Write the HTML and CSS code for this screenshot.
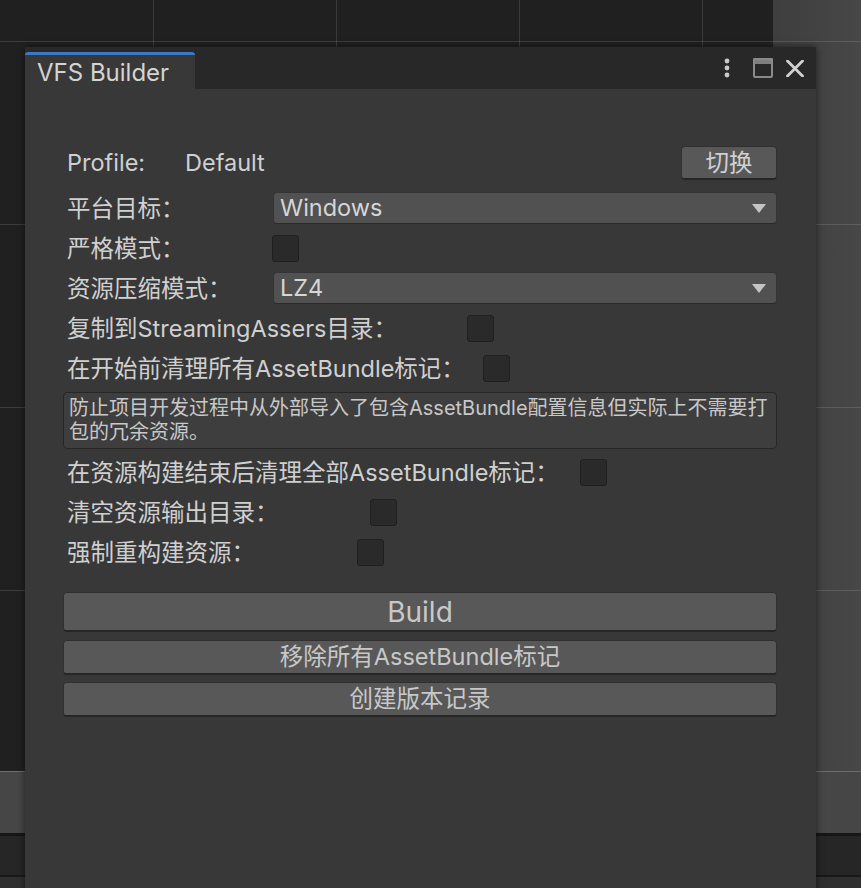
FILE: index.html
```html
<!DOCTYPE html>
<html lang="zh-CN">
<head>
<meta charset="utf-8">
<title>VFS Builder</title>
<link rel="stylesheet" href="styles.css">
</head>
<body>
<div class="window">
  <div class="tabbar">
    <div class="tab">VFS Builder</div>
    <div class="tab-actions">
      <svg class="ico-kebab" width="6" height="20" viewBox="0 0 6 20"><circle cx="3" cy="3" r="2.4"/><circle cx="3" cy="10" r="2.4"/><circle cx="3" cy="17" r="2.4"/></svg>
      <svg class="ico-max" width="20" height="20" viewBox="0 0 20 20"><rect x="0" y="0" width="20" height="6" rx="1"/><rect class="outline" x="1" y="1" width="18" height="18" rx="1"/></svg>
      <svg class="ico-close" width="18" height="17" viewBox="0 0 18 17"><path d="M1.5 1 L16.5 16 M16.5 1 L1.5 16"/></svg>
    </div>
  </div>
  <div class="content">
    <div class="row row-profile">
      <span class="label w-profile">Profile:</span>
      <span class="label">Default</span>
      <button class="btn btn-switch">切换</button>
    </div>
    <div class="row">
      <span class="label w-field">平台目标：</span>
      <div class="dropdown"><span>Windows</span><svg class="arrow" width="14" height="9" viewBox="0 0 14 9"><path d="M0 0 H14 L7 9 Z"/></svg></div>
    </div>
    <div class="row">
      <span class="label w-strict">严格模式：</span>
      <span class="checkbox"></span>
    </div>
    <div class="row">
      <span class="label w-field">资源压缩模式：</span>
      <div class="dropdown"><span>LZ4</span><svg class="arrow" width="14" height="9" viewBox="0 0 14 9"><path d="M0 0 H14 L7 9 Z"/></svg></div>
    </div>
    <div class="row">
      <span class="label w-copy">复制到StreamingAssers目录：</span>
      <span class="checkbox"></span>
    </div>
    <div class="row">
      <span class="label w-before">在开始前清理所有AssetBundle标记：</span>
      <span class="checkbox"></span>
    </div>
    <div class="helpbox">防止项目开发过程中从外部导入了包含AssetBundle配置信息但实际上不需要打<br>包的冗余资源。</div>
    <div class="row row-after-help">
      <span class="label w-after">在资源构建结束后清理全部AssetBundle标记：</span>
      <span class="checkbox"></span>
    </div>
    <div class="row">
      <span class="label w-clearout">清空资源输出目录：</span>
      <span class="checkbox"></span>
    </div>
    <div class="row">
      <span class="label w-force">强制重构建资源：</span>
      <span class="checkbox"></span>
    </div>
    <div class="actions">
      <button class="btn btn-build">Build</button>
      <button class="btn btn-wide btn-remove">移除所有AssetBundle标记</button>
      <button class="btn btn-wide">创建版本记录</button>
    </div>
  </div>
</div>
</body>
</html>
```

FILE: styles.css
```css
html, body {
  margin: 0;
  padding: 0;
}

body {
  width: 861px;
  height: 888px;
  overflow: hidden;
  position: relative;
  font-family: Inter, "Noto Sans CJK SC", sans-serif;
  background:
    linear-gradient(to bottom, transparent 771px, #6c6c6c 771px, #6c6c6c 772px, #464646 772px, #464646 833px, #161616 833px, #161616 836px, #262626 836px, #262626 875px, #181818 875px, #181818 877px, #2f2f2f 877px),
    repeating-linear-gradient(to bottom, transparent 0, transparent 41px, rgba(255,255,255,0.13) 41px, rgba(255,255,255,0.13) 42px, transparent 42px, transparent 183px),
    repeating-linear-gradient(to right, transparent 0, transparent 153px, rgba(255,255,255,0.12) 153px, rgba(255,255,255,0.12) 154px, transparent 154px, transparent 183px),
    linear-gradient(to right, #202020 0, #202020 773px, #3e3e3e 773px, #474747 861px);
}

.window {
  position: absolute;
  left: 25px;
  top: 47px;
  width: 791px;
  height: 860px;
  background: #383838;
  box-shadow: 0 0 7px rgba(0, 0, 0, 0.55);
  display: flex;
  flex-direction: column;
}

.tabbar {
  flex: none;
  height: 42px;
  background: #282828;
  display: flex;
  align-items: flex-end;
  justify-content: space-between;
}

.tab {
  width: 170px;
  height: 37px;
  box-sizing: border-box;
  border-top: 3px solid #3a79c4;
  border-radius: 3px 3px 0 0;
  background: #383838;
  padding-left: 12px;
  font-size: 24px;
  color: #d4d4d4;
  display: flex;
  align-items: center;
}

.tab-actions {
  align-self: center;
  display: flex;
  align-items: center;
  padding-right: 12px;
}

.ico-kebab {
  fill: #cacaca;
  margin-right: 23px;
}

.ico-max {
  fill: #7e7e7e;
  margin-right: 13px;
}

.ico-max .outline {
  fill: none;
  stroke: #8a8a8a;
  stroke-width: 2;
}

.ico-close {
  fill: none;
  stroke: #d2d2d2;
  stroke-width: 2.8;
  stroke-linecap: round;
}

.content {
  padding: 57px 39px 0 38px;
  display: flex;
  flex-direction: column;
}

.row {
  display: flex;
  align-items: center;
  height: 40px;
}

.row-profile {
  height: 34px;
  margin-bottom: 8px;
}

.row-after-help {
  margin-top: 3px;
}

.label {
  flex: none;
  box-sizing: border-box;
  padding-left: 4px;
  padding-bottom: 2px;
  font-size: 23.5px;
  color: #d0d0d0;
  white-space: nowrap;
}

.w-profile { width: 118px; }
.w-field { width: 210px; }
.w-strict { width: 209px; }
.w-copy { width: 404px; }
.w-before { width: 420px; }
.w-after { width: 517px; }
.w-clearout { width: 307px; }
.w-force { width: 294px; }

.btn {
  box-sizing: border-box;
  background: #585858;
  border: 1px solid #303030;
  border-bottom: 2px solid #262626;
  border-radius: 4px;
  color: #c8c8c8;
  font-family: Inter, "Noto Sans CJK SC", sans-serif;
  font-size: 23.5px;
  padding: 0;
  margin: 0;
  line-height: 1;
}

.btn-switch {
  margin-left: auto;
  width: 96px;
  height: 34px;
  color: #d0d0d0;
}

.dropdown {
  flex: 1;
  height: 32px;
  box-sizing: border-box;
  background: #515151;
  border: 1px solid #343434;
  border-bottom-color: #2a2a2a;
  border-radius: 4px;
  display: flex;
  align-items: center;
  justify-content: space-between;
  padding: 0 10px 2px 6px;
  font-size: 23.5px;
  color: #d6d6d6;
}

.arrow {
  fill: #c4c4c4;
  margin-top: 2px;
}

.checkbox {
  flex: none;
  width: 27px;
  height: 27px;
  box-sizing: border-box;
  background: #2a2a2a;
  border: 1px solid #1f1f1f;
  border-radius: 3px;
}

.helpbox {
  margin-top: 4px;
  height: 57px;
  box-sizing: border-box;
  background: #3e3e3e;
  border: 1px solid #262626;
  border-radius: 4px;
  padding: 3px 5px 0;
  font-size: 20px;
  line-height: 24px;
  color: #c8c8c8;
  white-space: nowrap;
  overflow: hidden;
}

.actions {
  margin-top: 20px;
  display: flex;
  flex-direction: column;
}

.btn-build {
  height: 40px;
  font-size: 28px;
  margin-bottom: 8px;
}

.btn-wide {
  height: 35px;
}

.btn-remove {
  margin-bottom: 7px;
}
```
